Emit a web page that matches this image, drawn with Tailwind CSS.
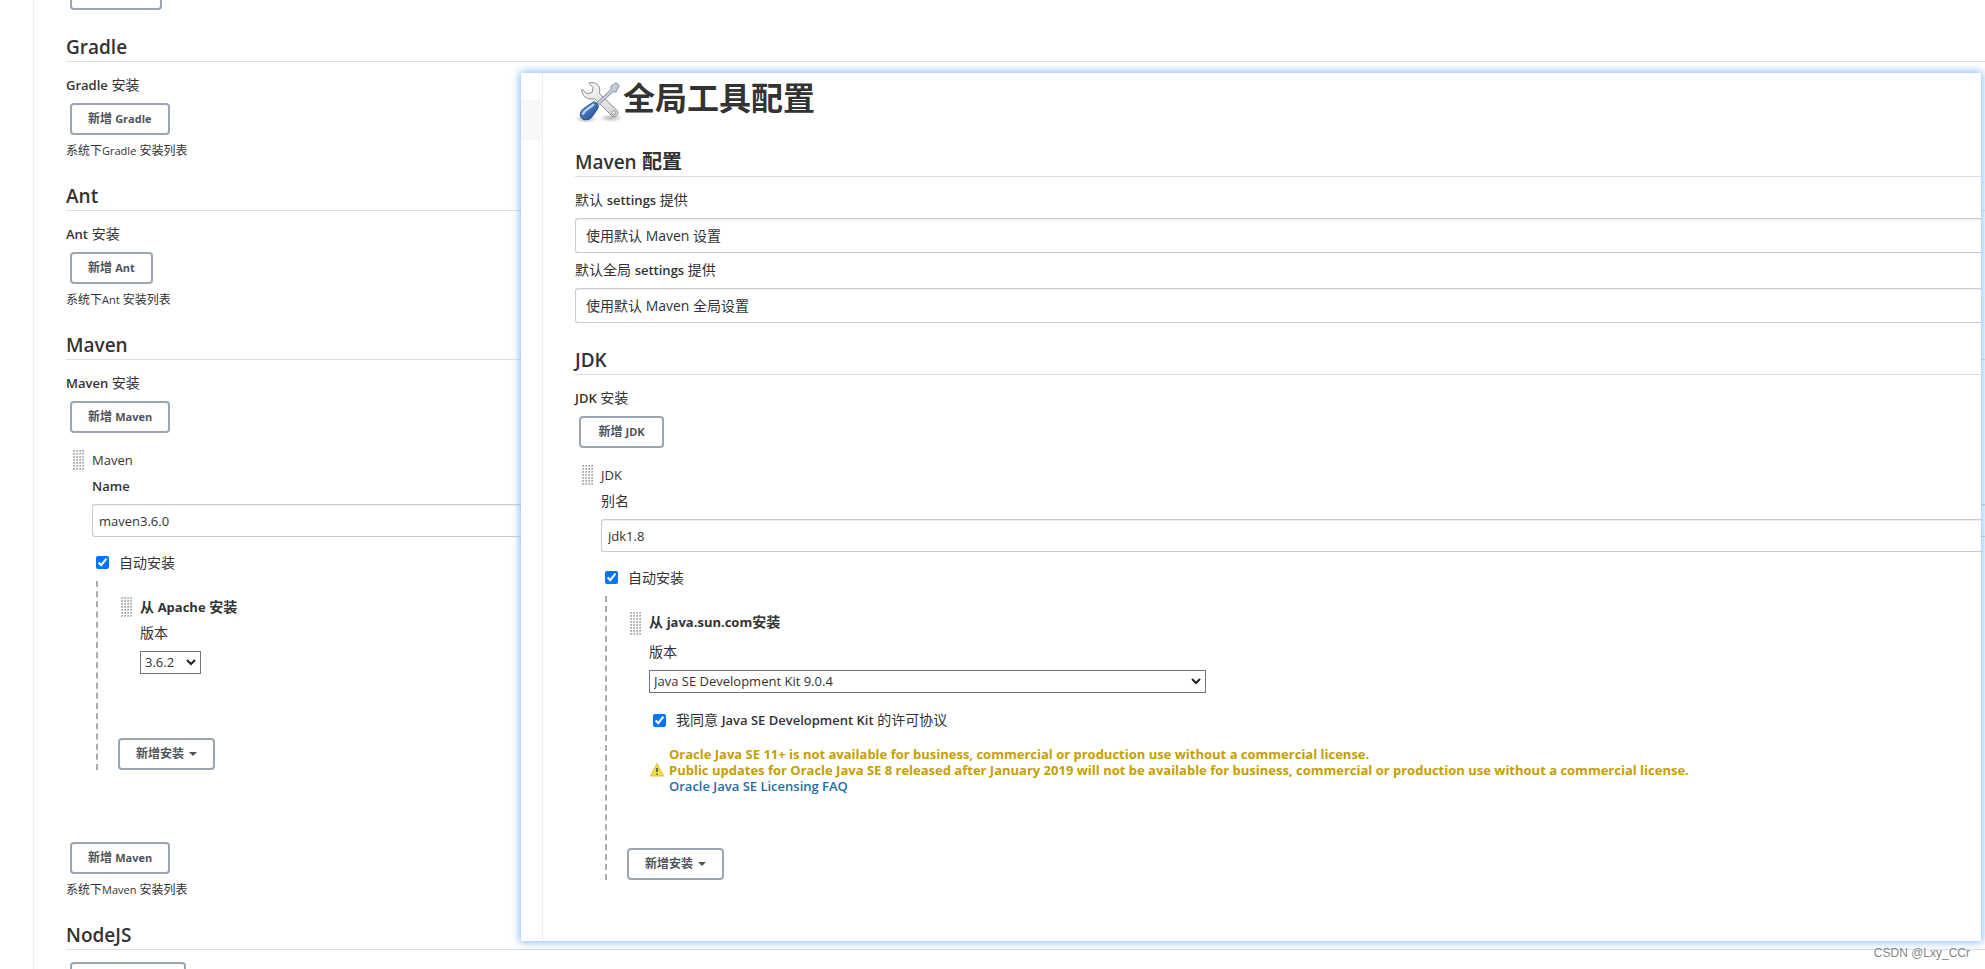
<!DOCTYPE html>
<html lang="zh-CN">
<head>
<meta charset="utf-8">
<title>全局工具配置</title>
<script src="https://cdn.jsdelivr.net/npm/@tailwindcss/browser@4"></script>
</head>
<body class="relative h-screen overflow-hidden bg-white font-['Open_Sans','Noto_Sans_CJK_SC',sans-serif] text-sm text-[#333]">
<svg class="absolute h-0 w-0" aria-hidden="true">
  <defs>
    <pattern id="dots" width="3" height="3" patternUnits="userSpaceOnUse">
      <rect width="2" height="2" fill="#c6c6c2"/><rect x="1" width="1" height="1" fill="#a2a29e"/>
    </pattern>
  </defs>
</svg>

<main class="ml-[33px] h-full border-l border-[#eaeff2] pl-8">
  <div class="mb-6 flex h-[10px] items-end overflow-hidden pl-1">
    <button class="h-8 w-[92px] shrink-0 rounded border-2 border-[#9aa5af]" aria-label="新增"></button>
  </div>

  <section>
    <h2 class="border-b border-[#dcdfe2] text-[19px] leading-[27px] font-semibold">Gradle</h2>
    <p class="mt-3 leading-[22px]"><span class="text-[13px] font-semibold">Gradle</span> 安装</p>
    <button class="mt-[7px] ml-1 block h-8 rounded border-2 border-[#9aa5af] px-4 text-xs font-bold text-[#4d545d]">新增 <span class="text-[11px]">Gradle</span></button>
    <p class="mt-[6px] text-xs leading-5">系统下<span class="text-[11px]">Gradle</span> 安装列表</p>
  </section>

  <section class="mt-[22px]">
    <h2 class="border-b border-[#dcdfe2] text-[19px] leading-[27px] font-semibold">Ant</h2>
    <p class="mt-3 leading-[22px]"><span class="text-[13px] font-semibold">Ant</span> 安装</p>
    <button class="mt-[7px] ml-1 block h-8 rounded border-2 border-[#9aa5af] px-4 text-xs font-bold text-[#4d545d]">新增 <span class="text-[11px]">Ant</span></button>
    <p class="mt-[6px] text-xs leading-5">系统下<span class="text-[11px]">Ant</span> 安装列表</p>
  </section>

  <section class="mt-[22px]">
    <h2 class="border-b border-[#dcdfe2] text-[19px] leading-[27px] font-semibold">Maven</h2>
    <p class="mt-3 leading-[22px]"><span class="text-[13px] font-semibold">Maven</span> 安装</p>
    <button class="mt-[7px] ml-1 block h-8 rounded border-2 border-[#9aa5af] px-4 text-xs font-bold text-[#4d545d]">新增 <span class="text-[11px]">Maven</span></button>

    <div class="mt-[17px] flex pl-[7px]">
      <svg class="mr-[7px] h-5 w-3 shrink-0" aria-hidden="true"><rect width="12" height="20" fill="url(#dots)"/></svg>
      <div class="min-w-0 flex-1">
        <p class="text-[13px] leading-5">Maven</p>
        <label for="maven-name" class="mt-[6px] block text-[13px] leading-5 font-semibold">Name</label>
        <input id="maven-name" type="text" value="maven3.6.0" class="mt-2 block h-[33px] w-full rounded-l-[3px] border border-r-0 border-[#ccc] px-[6px] text-[13px] shadow-[inset_0_1px_1px_#00000013]">
        <div class="mt-4 flex h-5 items-center pl-1">
          <input id="maven-auto" type="checkbox" checked class="mr-[10px] mb-[1px] h-[13px] w-[13px] accent-[#0075ff]">
          <label for="maven-auto" class="leading-5">自动安装</label>
        </div>
        <div class="mt-2 ml-1 border-l-2 border-dashed border-[#aaa] pt-4 pl-5">
          <div class="flex pl-[3px]">
            <svg class="mr-[7px] h-5 w-3 shrink-0" aria-hidden="true"><rect width="12" height="20" fill="url(#dots)"/></svg>
            <div>
              <p class="leading-5 font-bold">从 <span class="text-[13px]">Apache</span> 安装</p>
              <label for="maven-version" class="mt-[6px] block leading-5">版本</label>
              <div class="relative mt-2 w-[61px]">
                <select id="maven-version" class="block h-[23px] w-full appearance-none border border-[#767676] bg-white pl-1 text-[13px]"><option>3.6.2</option></select>
                <svg class="pointer-events-none absolute top-2 right-[5px] h-[7px] w-[10px]" viewBox="0 0 10 7" fill="none" stroke="#222" stroke-width="2" aria-hidden="true"><path d="M1 1l4 4 4-4"/></svg>
              </div>
            </div>
          </div>
          <button class="mt-16 flex h-8 items-center gap-[5px] rounded border-2 border-[#9aa5af] px-4 text-xs font-bold text-[#4d545d]">新增安装 <svg class="h-1 w-2" viewBox="0 0 8 4" fill="#4d545d" aria-hidden="true"><path d="M0 0h8L4 4z"/></svg></button>
        </div>
      </div>
    </div>
    <button class="mt-[72px] ml-1 block h-8 rounded border-2 border-[#9aa5af] px-4 text-xs font-bold text-[#4d545d]">新增 <span class="text-[11px]">Maven</span></button>
    <p class="mt-[6px] text-xs leading-5">系统下<span class="text-[11px]">Maven</span> 安装列表</p>
  </section>

  <section class="mt-[22px]">
    <h2 class="border-b border-[#dcdfe2] text-[19px] leading-[27px] font-semibold">NodeJS</h2>
    <button class="mt-3 ml-1 block h-8 w-[116px] rounded border-2 border-[#9aa5af]" aria-label="新增 NodeJS"></button>
  </section>
</main>

<div class="absolute top-[73px] right-1 left-[521px] flex overflow-hidden bg-white shadow-[0_0_8px_1px_#7db6fb]">
  <aside class="w-[21px] shrink-0 pt-[27px]"><div class="h-10 bg-[#f8f8f8]"></div></aside>
  <div class="min-w-0 flex-1 border-l border-[#eaeff2] pt-[3px] pb-[61px] pl-8">
    <div class="flex items-start">
      <svg class="h-12 w-12 shrink-0" viewBox="0 0 48 48" aria-hidden="true">
        <defs>
          <linearGradient id="metal" x1="0" y1="0" x2="1" y2="1"><stop offset="0" stop-color="#fafafa"/><stop offset="1" stop-color="#d4d6d2"/></linearGradient>
          <linearGradient id="blue" x1="0" y1="0" x2="1" y2="1"><stop offset="0" stop-color="#86aede"/><stop offset=".5" stop-color="#3d70b4"/><stop offset="1" stop-color="#204a87"/></linearGradient>
          <radialGradient id="shade"><stop offset="0" stop-color="#000" stop-opacity=".3"/><stop offset="1" stop-color="#000" stop-opacity="0"/></radialGradient>
        </defs>
        <ellipse cx="11" cy="43" rx="11" ry="4" fill="url(#shade)"/>
        <ellipse cx="36" cy="42" rx="12" ry="4" fill="url(#shade)"/>
        <path d="M17 6.500c3.500 0 6.500 2 7.500 5.500.5 2 0 4 0 5.500L42 34.500c1.500 2 1.200 4-.5 5.300-1.600 1.200-3.500 1.200-5-.3L19.500 22.500c-5 1.500-9.500-.5-11.500-4-1-2-1.300-3.500-1-5.300l5 4.600 5-1.300 1.200-4.800-4.200-4.500z" fill="url(#metal)" stroke="#8b8d89" stroke-width="1"/>
        <circle cx="38.500" cy="36.800" r="2" fill="#eee" stroke="#999"/>
        <path d="M22 26.500L36 13.500v-3.500l5-3.200 3.200 2.700-3.400 6.500h-3L24 28.500z" fill="#c3ccd8" stroke="#8592a6" stroke-width="1"/>
        <path d="M17.500 26.500c2.200-1.500 5.500.5 5.700 3.700.2 2.600-2.700 5.300-5.200 9.300-2 3.300-5.500 5-9 4C5.300 42.300 4.500 38.500 6 35.500c2-3.500 8.500-6.500 11.500-9z" fill="url(#blue)" stroke="#204a87"/>
        <path d="M8 38c1.500-4 7.500-6.500 10.500-9.500" stroke="#c3d8f2" stroke-width="2" fill="none" stroke-linecap="round"/>
      </svg>
      <h1 class="text-[32px] leading-[44px] font-bold">全局工具配置</h1>
    </div>

    <section class="mt-6">
      <h2 class="border-b border-[#dcdfe2] text-xl leading-[27px] font-bold"><span class="text-[19px] font-semibold">Maven</span> 配置</h2>
      <label for="settings" class="mt-3 block leading-[22px]">默认 <span class="text-[13px] font-semibold">settings</span> 提供</label>
      <select id="settings" class="mt-[7px] block h-[35px] w-full appearance-none rounded-l-[3px] border border-r-0 border-[#ccc] px-[10px] shadow-[inset_0_1px_1px_#00000013]"><option>使用默认 Maven 设置</option></select>
      <label for="global-settings" class="mt-[6px] block leading-[22px]">默认全局 <span class="text-[13px] font-semibold">settings</span> 提供</label>
      <select id="global-settings" class="mt-[7px] block h-[35px] w-full appearance-none rounded-l-[3px] border border-r-0 border-[#ccc] px-[10px] shadow-[inset_0_1px_1px_#00000013]"><option>使用默认 Maven 全局设置</option></select>
    </section>

    <section class="mt-6">
      <h2 class="border-b border-[#dcdfe2] text-[19px] leading-[27px] font-semibold">JDK</h2>
      <p class="mt-3 leading-[22px]"><span class="text-[13px] font-semibold">JDK</span> 安装</p>
      <button class="mt-[7px] ml-1 block h-8 min-w-[85px] rounded border-2 border-[#9aa5af] px-4 text-xs font-bold text-[#4d545d]">新增 <span class="text-[11px]">JDK</span></button>
      <div class="mt-[17px] flex pl-[7px]">
        <svg class="mr-[7px] h-5 w-3 shrink-0" aria-hidden="true"><rect width="12" height="20" fill="url(#dots)"/></svg>
        <div class="min-w-0 flex-1">
          <p class="text-[13px] leading-5">JDK</p>
          <label for="jdk-name" class="mt-[6px] block leading-5">别名</label>
          <input id="jdk-name" type="text" value="jdk1.8" class="mt-2 block h-[33px] w-full rounded-l-[3px] border border-r-0 border-[#ccc] px-[6px] text-[13px] shadow-[inset_0_1px_1px_#00000013]">
          <div class="mt-4 flex h-5 items-center pl-1">
            <input id="jdk-auto" type="checkbox" checked class="mr-[10px] mb-[1px] h-[13px] w-[13px] accent-[#0075ff]">
            <label for="jdk-auto" class="leading-5">自动安装</label>
          </div>
          <div class="mt-2 ml-1 border-l-2 border-dashed border-[#aaa] pt-4 pl-5">
            <div class="flex pl-[3px]">
              <svg class="mr-[7px] h-6 w-3 shrink-0" aria-hidden="true"><rect width="12" height="24" fill="url(#dots)"/></svg>
              <div class="min-w-0 flex-1">
                <p class="leading-5 font-bold">从 <span class="text-[13px]">java.sun.com</span>安装</p>
                <label for="jdk-version" class="mt-[10px] block leading-5">版本</label>
                <div class="relative mt-2 w-[557px]">
                  <select id="jdk-version" class="block h-[23px] w-full appearance-none border border-[#767676] bg-white pl-1 text-[13px]"><option>Java SE Development Kit 9.0.4</option></select>
                  <svg class="pointer-events-none absolute top-2 right-[5px] h-[7px] w-[10px]" viewBox="0 0 10 7" fill="none" stroke="#222" stroke-width="2" aria-hidden="true"><path d="M1 1l4 4 4-4"/></svg>
                </div>
                <div class="mt-[17px] flex h-5 items-center pl-1">
                  <input id="jdk-license" type="checkbox" checked class="mr-[10px] h-[13px] w-[13px] accent-[#0075ff]">
                  <label for="jdk-license" class="leading-5">我同意 <span class="text-[13px] font-semibold">Java SE Development Kit</span> 的许可协议</label>
                </div>
                <div class="mt-4 flex items-center gap-1 text-[13px] leading-4">
                  <svg class="h-4 w-4 shrink-0" viewBox="0 0 16 16" aria-hidden="true"><path d="M8 1.700L14.500 14h-13z" fill="#f5e13c" stroke="#d9bd2a" stroke-linejoin="round"/><path d="M8 6v4M8 11.500v1.300" stroke="#444" stroke-width="1.500"/></svg>
                  <div class="whitespace-nowrap">
                    <p class="font-bold text-[#c4a000]">Oracle Java SE 11+ is not available for business, commercial or production use without a commercial license.<br>Public updates for Oracle Java SE 8 released after January 2019 will not be available for business, commercial or production use without a commercial license.</p>
                    <a href="#" class="block font-semibold text-[#1f6ea4]">Oracle Java SE Licensing FAQ</a>
                  </div>
                </div>
              </div>
            </div>
            <button class="mt-[54px] flex h-8 items-center gap-[5px] rounded border-2 border-[#9aa5af] px-4 text-xs font-bold text-[#4d545d]">新增安装 <svg class="h-1 w-2" viewBox="0 0 8 4" fill="#4d545d" aria-hidden="true"><path d="M0 0h8L4 4z"/></svg></button>
          </div>
        </div>
      </div>
    </section>
  </div>
</div>
<p class="absolute right-[15px] bottom-2 font-['Liberation_Sans',sans-serif] text-xs leading-4 text-[#888]">CSDN @Lxy_CCr</p>
</body>
</html>
